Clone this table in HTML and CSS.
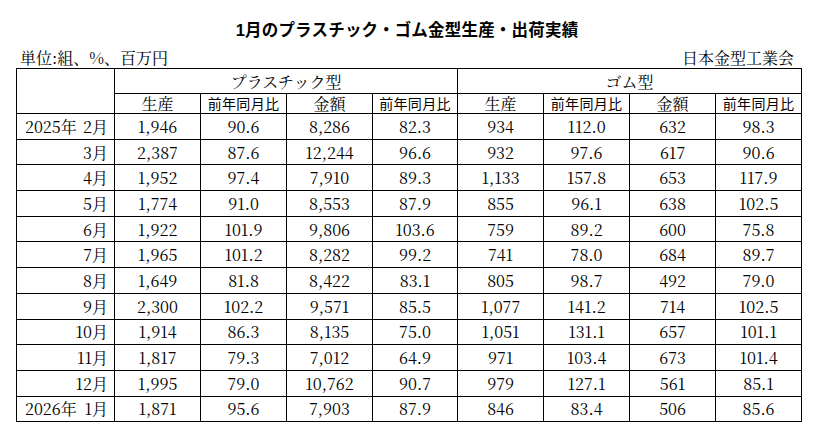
FILE: index.html
```html
<!DOCTYPE html>
<html lang="ja">
<head>
<meta charset="utf-8">
<title>1月のプラスチック・ゴム金型生産・出荷実績</title>
<link rel="stylesheet" href="styles.css">
</head>
<body>
<div class="page">
  <h1 class="title">1月のプラスチック・ゴム金型生産・出荷実績</h1>
  <div class="meta">
    <span>単位:組、%、百万円</span>
    <span>日本金型工業会</span>
  </div>
  <table class="data">
    <colgroup>
      <col class="c-month">
      <col class="c98"><col class="c86"><col class="c86"><col class="c85">
      <col class="c86"><col class="c84"><col class="c86"><col class="c86">
    </colgroup>
    <thead>
      <tr class="h1">
        <th rowspan="2"></th>
        <th colspan="4">プラスチック型</th>
        <th colspan="4">ゴム型</th>
      </tr>
      <tr class="h2">
        <th>生産</th><th class="sm">前年同月比</th><th>金額</th><th class="sm">前年同月比</th>
        <th>生産</th><th class="sm">前年同月比</th><th>金額</th><th class="sm">前年同月比</th>
      </tr>
    </thead>
    <tbody>
      <tr><td class="m"><span class="ym"><span>2025年</span><span>2月</span></span></td><td>1,946</td><td>90.6</td><td>8,286</td><td>82.3</td><td>934</td><td>112.0</td><td>632</td><td>98.3</td></tr>
      <tr><td class="m"><span class="ym"><span></span><span>3月</span></span></td><td>2,387</td><td>87.6</td><td>12,244</td><td>96.6</td><td>932</td><td>97.6</td><td>617</td><td>90.6</td></tr>
      <tr><td class="m"><span class="ym"><span></span><span>4月</span></span></td><td>1,952</td><td>97.4</td><td>7,910</td><td>89.3</td><td>1,133</td><td>157.8</td><td>653</td><td>117.9</td></tr>
      <tr><td class="m"><span class="ym"><span></span><span>5月</span></span></td><td>1,774</td><td>91.0</td><td>8,553</td><td>87.9</td><td>855</td><td>96.1</td><td>638</td><td>102.5</td></tr>
      <tr><td class="m"><span class="ym"><span></span><span>6月</span></span></td><td>1,922</td><td>101.9</td><td>9,806</td><td>103.6</td><td>759</td><td>89.2</td><td>600</td><td>75.8</td></tr>
      <tr><td class="m"><span class="ym"><span></span><span>7月</span></span></td><td>1,965</td><td>101.2</td><td>8,282</td><td>99.2</td><td>741</td><td>78.0</td><td>684</td><td>89.7</td></tr>
      <tr><td class="m"><span class="ym"><span></span><span>8月</span></span></td><td>1,649</td><td>81.8</td><td>8,422</td><td>83.1</td><td>805</td><td>98.7</td><td>492</td><td>79.0</td></tr>
      <tr><td class="m"><span class="ym"><span></span><span>9月</span></span></td><td>2,300</td><td>102.2</td><td>9,571</td><td>85.5</td><td>1,077</td><td>141.2</td><td>714</td><td>102.5</td></tr>
      <tr><td class="m"><span class="ym"><span></span><span>10月</span></span></td><td>1,914</td><td>86.3</td><td>8,135</td><td>75.0</td><td>1,051</td><td>131.1</td><td>657</td><td>101.1</td></tr>
      <tr><td class="m"><span class="ym"><span></span><span>11月</span></span></td><td>1,817</td><td>79.3</td><td>7,012</td><td>64.9</td><td>971</td><td>103.4</td><td>673</td><td>101.4</td></tr>
      <tr><td class="m"><span class="ym"><span></span><span>12月</span></span></td><td>1,995</td><td>79.0</td><td>10,762</td><td>90.7</td><td>979</td><td>127.1</td><td>561</td><td>85.1</td></tr>
      <tr><td class="m"><span class="ym"><span>2026年</span><span>1月</span></span></td><td>1,871</td><td>95.6</td><td>7,903</td><td>87.9</td><td>846</td><td>83.4</td><td>506</td><td>85.6</td></tr>
    </tbody>
  </table>
</div>
</body>
</html>
```

FILE: styles.css
```css
html, body {
  margin: 0;
  padding: 0;
  background: #fff;
  color: #000;
}

.page {
  width: 814px;
  padding-top: 20px;
  font-family: "Noto Serif CJK JP", "Liberation Serif", "Noto Sans CJK JP", serif;
}

.title {
  margin: 0;
  font-family: "Liberation Sans", "Noto Sans CJK JP", sans-serif;
  font-size: 16.5px;
  font-weight: bold;
  line-height: 20px;
  text-align: center;
  letter-spacing: 0.2px;
}

.meta {
  display: flex;
  justify-content: space-between;
  margin: 8px 20px 0 20px;
  font-size: 16px;
  line-height: 20px;
}

.data {
  margin-left: 16px;
  width: 784px;
  border-collapse: collapse;
  table-layout: fixed;
  font-size: 16px;
}

.c-month { width: 98px; }
.c98 { width: 86px; }
.c86 { width: 86px; }
.c85 { width: 85px; }
.c84 { width: 86px; }

.data th,
.data td {
  border: 1px solid #000;
  padding: 0;
  text-align: center;
  font-weight: normal;
  white-space: nowrap;
}

.h1 th { height: 24px; }
.h2 th { height: 19px; line-height: 19px; }
.h2 th.sm {
  font-family: "Noto Sans CJK JP", sans-serif;
  font-size: 14px;
  letter-spacing: 0.3px;
}

.data tbody td { height: 24.7px; }

.data td.m { padding: 0 6px 0 8px; }

.ym {
  display: flex;
  justify-content: space-between;
}
```
